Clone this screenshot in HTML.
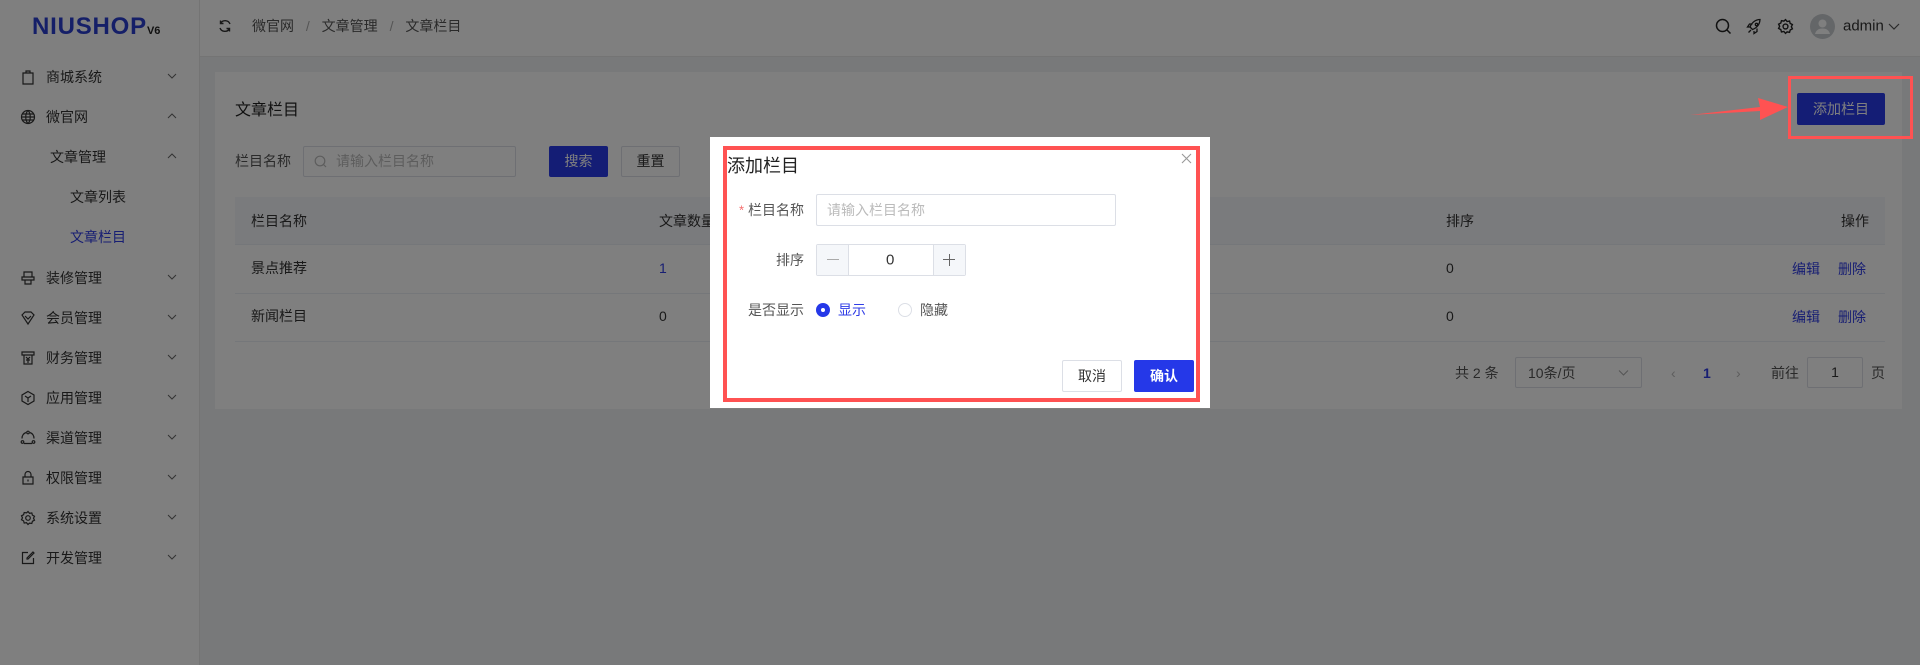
<!DOCTYPE html>
<html><head><meta charset="utf-8"><style>
*{margin:0;padding:0;box-sizing:border-box}
body{width:1920px;height:665px;overflow:hidden;background:#f0f2f5;font-family:"Liberation Sans","Noto Sans CJK SC",sans-serif;font-size:14px;color:#333;position:relative}
.a{position:absolute}
.side{left:0;top:0;width:200px;height:665px;background:#fff;border-right:1px solid #e8e8e8}
.hdr{left:200px;top:0;width:1720px;height:57px;background:#fff;border-bottom:1px solid #e8e8e8}
.mi{position:absolute;left:0;width:200px;height:40px;line-height:40px}
.mi .t{position:absolute;left:46px}
.mi svg.ic{position:absolute;left:20px;top:12px}
.mi .ch{position:absolute;left:167px;top:14px}
.card{left:215px;top:72px;width:1687px;height:337px;background:#fff}
.c{position:absolute;transform:translateY(-50%);white-space:nowrap}
.btn{position:absolute;text-align:center;border-radius:2px}
.ov{left:0;top:0;width:1920px;height:665px;background:rgba(0,0,0,.5)}
.blue{color:#2f3ce6}
</style></head><body>
<div class="a side">
 <div class="a" style="left:32px;top:13px;font-size:24px;font-weight:bold;color:#2a3fd0;letter-spacing:0.8px;font-family:'Liberation Sans',sans-serif">NIUSHOP<span style="font-size:11px;color:#222;letter-spacing:0">V6</span></div>
</div>
<div class="a" style="left:0;top:0;width:200px">
 <div class="mi" style="top:57px"><svg class="ic" width="16" height="16" viewBox="0 0 16 16" fill="none" stroke="#333" stroke-width="1.2"><path d="M3 4h10v11H3z M6 4V2h4v2"/></svg><span class="t">商城系统</span><svg class="ch" width="10" height="10" viewBox="0 0 10 10" fill="none" stroke="#666"><path d="M1 3l4 4 4-4"/></svg></div>
 <div class="mi" style="top:97px"><svg class="ic" width="16" height="16" viewBox="0 0 16 16" fill="none" stroke="#333" stroke-width="1.2"><circle cx="8" cy="8" r="6.5"/><path d="M1.5 8h13M8 1.5c-3 3-3 10 0 13M8 1.5c3 3 3 10 0 13M2.5 5h11M2.5 11h11"/></svg><span class="t">微官网</span><svg class="ch" width="10" height="10" viewBox="0 0 10 10" fill="none" stroke="#666"><path d="M1 7l4-4 4 4"/></svg></div>
 <div class="mi" style="top:137px"><span class="t" style="left:50px">文章管理</span><svg class="ch" width="10" height="10" viewBox="0 0 10 10" fill="none" stroke="#666"><path d="M1 7l4-4 4 4"/></svg></div>
 <div class="mi" style="top:177px"><span class="t" style="left:70px">文章列表</span></div>
 <div class="mi" style="top:217px"><span class="t blue" style="left:70px">文章栏目</span></div>
 <div class="mi" style="top:258px"><svg class="ic" width="16" height="16" viewBox="0 0 16 16" fill="none" stroke="#333" stroke-width="1.2"><path d="M4 2h8v5H4zM2 7h12v3H2zM5 10v4h6v-4"/></svg><span class="t">装修管理</span><svg class="ch" width="10" height="10" viewBox="0 0 10 10" fill="none" stroke="#666"><path d="M1 3l4 4 4-4"/></svg></div>
 <div class="mi" style="top:298px"><svg class="ic" width="16" height="16" viewBox="0 0 16 16" fill="none" stroke="#333" stroke-width="1.2"><path d="M2 5l3-3h6l3 3-6 9z M5 6l3 3 3-3"/></svg><span class="t">会员管理</span><svg class="ch" width="10" height="10" viewBox="0 0 10 10" fill="none" stroke="#666"><path d="M1 3l4 4 4-4"/></svg></div>
 <div class="mi" style="top:338px"><svg class="ic" width="16" height="16" viewBox="0 0 16 16" fill="none" stroke="#333" stroke-width="1.2"><path d="M2 2h12v3H2zM4 5v9h8V5M6 7l2 2 2-2M8 9v4M6 10h4"/></svg><span class="t">财务管理</span><svg class="ch" width="10" height="10" viewBox="0 0 10 10" fill="none" stroke="#666"><path d="M1 3l4 4 4-4"/></svg></div>
 <div class="mi" style="top:378px"><svg class="ic" width="16" height="16" viewBox="0 0 16 16" fill="none" stroke="#333" stroke-width="1.2"><path d="M8 1.5l6 3.5v6l-6 3.5-6-3.5V5z M5 6l3 2 3-2M8 8v4"/></svg><span class="t">应用管理</span><svg class="ch" width="10" height="10" viewBox="0 0 10 10" fill="none" stroke="#666"><path d="M1 3l4 4 4-4"/></svg></div>
 <div class="mi" style="top:418px"><svg class="ic" width="16" height="16" viewBox="0 0 16 16" fill="none" stroke="#333" stroke-width="1.2"><path d="M6 2.5a6 6 0 0 0-4 6M10 2.5a6 6 0 0 1 4 6M4 13.5h8"/><circle cx="8" cy="2.5" r="1.3"/><circle cx="2.5" cy="12" r="1.3"/><circle cx="13.5" cy="12" r="1.3"/></svg><span class="t">渠道管理</span><svg class="ch" width="10" height="10" viewBox="0 0 10 10" fill="none" stroke="#666"><path d="M1 3l4 4 4-4"/></svg></div>
 <div class="mi" style="top:458px"><svg class="ic" width="16" height="16" viewBox="0 0 16 16" fill="none" stroke="#333" stroke-width="1.2"><path d="M3 7h10v7H3zM5 7V4.5a3 3 0 0 1 6 0V7M8 9.5v2"/></svg><span class="t">权限管理</span><svg class="ch" width="10" height="10" viewBox="0 0 10 10" fill="none" stroke="#666"><path d="M1 3l4 4 4-4"/></svg></div>
 <div class="mi" style="top:498px"><svg class="ic" width="16" height="16" viewBox="0 0 16 16" fill="none" stroke="#333" stroke-width="1.2"><circle cx="8" cy="8" r="2.3"/><path d="M8 1.5l1.5 1.8 2.3-.4.6 2.2 2.1 1.1-1 2 1 2-2.1 1.1-.6 2.2-2.3-.4L8 14.5l-1.5-1.8-2.3.4-.6-2.2-2.1-1.1 1-2-1-2 2.1-1.1.6-2.2 2.3.4z"/></svg><span class="t">系统设置</span><svg class="ch" width="10" height="10" viewBox="0 0 10 10" fill="none" stroke="#666"><path d="M1 3l4 4 4-4"/></svg></div>
 <div class="mi" style="top:538px"><svg class="ic" width="16" height="16" viewBox="0 0 16 16" fill="none" stroke="#333" stroke-width="1.2"><path d="M8 2.5H2.5v11h11V8M13 2l1 1-6 6H7V8z"/></svg><span class="t">开发管理</span><svg class="ch" width="10" height="10" viewBox="0 0 10 10" fill="none" stroke="#666"><path d="M1 3l4 4 4-4"/></svg></div>
</div>
<div class="a hdr"></div>
<svg class="a" style="left:218px;top:19px" width="14" height="14" viewBox="0 0 14 14" fill="none" stroke="#333" stroke-width="1.4"><path d="M12 5A5.2 5.2 0 0 0 2.5 4.5M2 9a5.2 5.2 0 0 0 9.5.5M2.5 1.5v3h3M11.5 12.5v-3h-3"/></svg>
<div class="c" style="left:252px;top:26px;color:#555">微官网 <span style="color:#aaa;margin:0 8px">/</span> 文章管理 <span style="color:#aaa;margin:0 8px">/</span> 文章栏目</div>
<svg class="a" style="left:1715px;top:18px" width="17" height="17" viewBox="0 0 17 17" fill="none" stroke="#222" stroke-width="1.5"><circle cx="7.5" cy="7.5" r="6"/><path d="M12 12l3.5 3.5"/></svg>
<svg class="a" style="left:1746px;top:18px" width="17" height="17" viewBox="0 0 17 17" fill="none" stroke="#222" stroke-width="1.3"><path d="M6 11l-2-2c2-5 6-7.5 10-7.5-.2 4-2.5 8-7.5 10zM4 9H1.5l2-3h3M8 13v2.5l3-2v-3M5 12l-2.5 2.5"/><circle cx="10.5" cy="6.5" r="1.2"/></svg>
<svg class="a" style="left:1777px;top:18px" width="17" height="17" viewBox="0 0 16 16" fill="none" stroke="#222" stroke-width="1.3"><circle cx="8" cy="8" r="2.3"/><path d="M8 1.5l1.5 1.8 2.3-.4.6 2.2 2.1 1.1-1 2 1 2-2.1 1.1-.6 2.2-2.3-.4L8 14.5l-1.5-1.8-2.3.4-.6-2.2-2.1-1.1 1-2-1-2 2.1-1.1.6-2.2 2.3.4z"/></svg>
<svg class="a" style="left:1810px;top:14px" width="25" height="25" viewBox="0 0 25 25"><circle cx="12.5" cy="12.5" r="12.5" fill="#c9ccd1"/><circle cx="12.5" cy="9.5" r="4" fill="#fff"/><path d="M5 20c1-4 4-5.5 7.5-5.5S19 16 20 20z" fill="#fff"/></svg>
<div class="c" style="left:1843px;top:26px;font-size:15px;color:#333">admin</div>
<svg class="a" style="left:1888px;top:21px" width="12" height="10" viewBox="0 0 12 10" fill="none" stroke="#555" stroke-width="1.2"><path d="M1 3l5 5 5-5"/></svg>

<div class="a card"></div>
<div class="c" style="left:235px;top:108px;font-size:16px;color:#222">文章栏目</div>
<div class="btn" style="left:1797px;top:93px;width:88px;height:32px;line-height:32px;background:#283aea;color:#fff">添加栏目</div>
<div class="c" style="left:235px;top:161px;color:#555">栏目名称</div>
<div class="a" style="left:303px;top:146px;width:213px;height:31px;border:1px solid #dcdfe6;border-radius:2px"></div>
<svg class="a" style="left:314px;top:155px" width="13" height="13" viewBox="0 0 13 13" fill="none" stroke="#bbb" stroke-width="1.2"><circle cx="6" cy="6" r="4.8"/><path d="M9.5 9.5l2.5 2.5"/></svg>
<div class="c" style="left:336px;top:161px;color:#bbb">请输入栏目名称</div>
<div class="btn" style="left:549px;top:146px;width:59px;height:31px;line-height:31px;background:#283aea;color:#fff">搜索</div>
<div class="btn" style="left:621px;top:146px;width:59px;height:31px;line-height:29px;border:1px solid #dcdfe6;color:#333">重置</div>
<div class="a" style="left:235px;top:197px;width:1650px;height:48px;background:#f5f6fa;border-bottom:1px solid #ebeef5"></div>
<div class="a" style="left:235px;top:293px;width:1650px;height:1px;background:#ebeef5"></div>
<div class="a" style="left:235px;top:341px;width:1650px;height:1px;background:#ebeef5"></div>
<div class="c" style="left:251px;top:221px">栏目名称</div>
<div class="c" style="left:659px;top:221px">文章数量</div>
<div class="c" style="left:1446px;top:221px">排序</div>
<div class="c" style="left:1841px;top:221px">操作</div>
<div class="c" style="left:251px;top:268px">景点推荐</div>
<div class="c blue" style="left:659px;top:268px">1</div>
<div class="c" style="left:1446px;top:268px">0</div>
<div class="c blue" style="left:1792px;top:269px">编辑</div><div class="c blue" style="left:1838px;top:269px">删除</div>
<div class="c" style="left:251px;top:316px">新闻栏目</div>
<div class="c" style="left:659px;top:316px">0</div>
<div class="c" style="left:1446px;top:316px">0</div>
<div class="c blue" style="left:1792px;top:317px">编辑</div><div class="c blue" style="left:1838px;top:317px">删除</div>
<div class="c" style="left:1455px;top:373px;color:#555">共 2 条</div>
<div class="a" style="left:1515px;top:357px;width:127px;height:31px;border:1px solid #dcdfe6;border-radius:2px"></div>
<div class="c" style="left:1528px;top:373px;color:#555">10条/页</div>
<svg class="a" style="left:1618px;top:369px" width="11" height="8" viewBox="0 0 11 8" fill="none" stroke="#aaa"><path d="M1 1.5l4.5 4.5 4.5-4.5"/></svg>
<div class="c" style="left:1671px;top:373px;color:#bbb">‹</div>
<div class="c blue" style="left:1703px;top:373px;font-weight:bold">1</div>
<div class="c" style="left:1736px;top:373px;color:#bbb">›</div>
<div class="c" style="left:1771px;top:373px;color:#555">前往</div>
<div class="a" style="left:1807px;top:357px;width:56px;height:31px;border:1px solid #dcdfe6;border-radius:2px;text-align:center;line-height:29px">1</div>
<div class="c" style="left:1871px;top:373px;color:#555">页</div>

<div class="a ov"></div>
<div class="a" style="left:1788px;top:76px;width:125px;height:63px;border:3px solid #ff5252"></div>
<svg class="a" style="left:1688px;top:94px" width="102" height="32" viewBox="0 0 102 32"><path d="M2 21L72 13 70 4 100 13 72 26 72 17z" fill="#ff5252"/></svg>

<div class="a" style="left:710px;top:137px;width:500px;height:271px;background:#fff"></div>
<div class="a" style="left:723px;top:146px;width:477px;height:256px;border:4px solid #ff5252"></div>
<div class="c" style="left:727px;top:165px;font-size:18px;color:#222">添加栏目</div>
<svg class="a" style="left:1181px;top:153px" width="11" height="11" viewBox="0 0 11 11" stroke="#999" stroke-width="1.1"><path d="M1 1l9 9M10 1l-9 9"/></svg>
<div class="c" style="left:739px;top:210px;color:#f56c6c;font-size:13px">*</div>
<div class="c" style="left:748px;top:210px;color:#555">栏目名称</div>
<div class="a" style="left:816px;top:194px;width:300px;height:32px;border:1px solid #dcdfe6;border-radius:2px"></div>
<div class="c" style="left:827px;top:210px;color:#bbb">请输入栏目名称</div>
<div class="c" style="left:776px;top:260px;color:#555">排序</div>
<div class="a" style="left:816px;top:244px;width:150px;height:32px;border:1px solid #dcdfe6;border-radius:2px"></div>
<div class="a" style="left:817px;top:245px;width:32px;height:30px;background:#f5f7fa;border-right:1px solid #dcdfe6"></div>
<div class="a" style="left:933px;top:245px;width:32px;height:30px;background:#f5f7fa;border-left:1px solid #dcdfe6"></div>
<div class="a" style="left:827px;top:259px;width:12px;height:1px;background:#aaa"></div>
<div class="a" style="left:943px;top:259px;width:12px;height:1px;background:#666"></div>
<div class="a" style="left:948.5px;top:254px;width:1px;height:12px;background:#666"></div>
<div class="c" style="left:886px;top:260px;font-size:15px;color:#333">0</div>
<div class="c" style="left:748px;top:310px;color:#555">是否显示</div>
<div class="a" style="left:816px;top:303px;width:14px;height:14px;border-radius:50%;background:#2538e8"></div>
<div class="a" style="left:821px;top:308px;width:4px;height:4px;border-radius:50%;background:#fff"></div>
<div class="c blue" style="left:838px;top:310px">显示</div>
<div class="a" style="left:898px;top:303px;width:14px;height:14px;border-radius:50%;border:1px solid #dcdfe6"></div>
<div class="c" style="left:920px;top:310px;color:#555">隐藏</div>
<div class="btn" style="left:1062px;top:360px;width:60px;height:32px;line-height:30px;border:1px solid #dcdfe6;color:#333">取消</div>
<div class="btn" style="left:1134px;top:360px;width:60px;height:32px;line-height:32px;background:#2538e8;color:#fff;font-weight:bold">确认</div>
</body></html>
